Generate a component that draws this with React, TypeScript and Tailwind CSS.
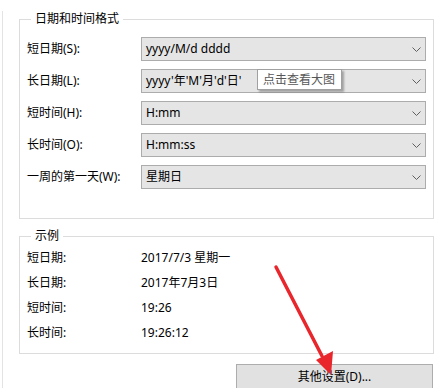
import React from "react";

const font = { fontFamily: '"Noto Sans", "Noto Sans CJK SC", sans-serif' };

function Chevron() {
  return (
    <svg width="9" height="5" viewBox="0 0 9 5" className="shrink-0">
      <polyline points="0.5,0.5 4.5,4.5 8.5,0.5" fill="none" stroke="#606060" strokeWidth="1" />
    </svg>
  );
}

function Row({ label, value }: { label: string; value: string }) {
  return (
    <div className="flex items-center h-[24px]">
      <div className="w-[114px] text-[12px] leading-[16px] text-black">{label}</div>
      <div className="flex-1 h-[24px] flex items-center justify-between bg-[#e5e5e5] border border-[#acacac] pl-[4px] pr-[4px] text-[12px] leading-[16px] text-black">
        <span>{value}</span>
        <Chevron />
      </div>
    </div>
  );
}

function Example({ label, value }: { label: string; value: string }) {
  return (
    <div className="flex items-center h-[25px] text-[12px] leading-[16px] text-black">
      <div className="w-[114px]">{label}</div>
      <div>{value}</div>
    </div>
  );
}

export default function App() {
  return (
    <div className="w-[436px] h-[388px] bg-white overflow-hidden relative" style={font}>
      <div className="pl-[2px] h-full">
        <div className="border-l border-[#e3e3e3] h-full pl-[16px] pr-[2px]">
          <fieldset className="mt-[11px] border border-[#dcdcdc] pl-[7px] pr-[7px] pt-[10px] pb-[29px]">
            <legend className="ml-[4px] px-[4px] text-[12px] leading-[16px] text-black">日期和时间格式</legend>
            <div className="flex flex-col gap-[8px]">
              <Row label="短日期(S):" value="yyyy/M/d dddd" />
              <Row label="长日期(L):" value="yyyy'年'M'月'd'日'" />
              <Row label="短时间(H):" value="H:mm" />
              <Row label="长时间(O):" value="H:mm:ss" />
              <Row label="一周的第一天(W):" value="星期日" />
            </div>
          </fieldset>
          <fieldset className="mt-[9px] border border-[#dcdcdc] pl-[7px] pr-[7px] pt-[1px] pb-[8px]">
            <legend className="ml-[4px] px-[4px] text-[12px] leading-[16px] text-black">示例</legend>
            <Example label="短日期:" value="2017/7/3 星期一" />
            <Example label="长日期:" value="2017年7月3日" />
            <Example label="短时间:" value="19:26" />
            <Example label="长时间:" value="19:26:12" />
          </fieldset>
          <div className="flex justify-end mt-[10px] pr-[1px]">
            <div className="w-[197px] h-[26px] bg-[#e1e1e1] border border-[#adadad] flex items-center justify-center text-[12px] leading-[16px] text-black">
              其他设置(D)...
            </div>
          </div>
        </div>
      </div>

      <div className="absolute left-[257px] top-[69px] w-[85px] h-[21px] bg-white border border-[#a0a0a0] shadow-[2px_2px_2px_rgba(0,0,0,0.3)] flex items-center pl-[5px] text-[12px] leading-[16px] text-[#575757]">
        点击查看大图
      </div>

      <svg className="absolute left-0 top-0 pointer-events-none" width="436" height="388" viewBox="0 0 436 388">
        <line x1="276" y1="267" x2="322" y2="356" stroke="#e8262b" strokeWidth="3.5" strokeLinecap="round" />
        <polygon points="316,360 333,351 331,375" fill="#e8262b" />
      </svg>
    </div>
  );
}
